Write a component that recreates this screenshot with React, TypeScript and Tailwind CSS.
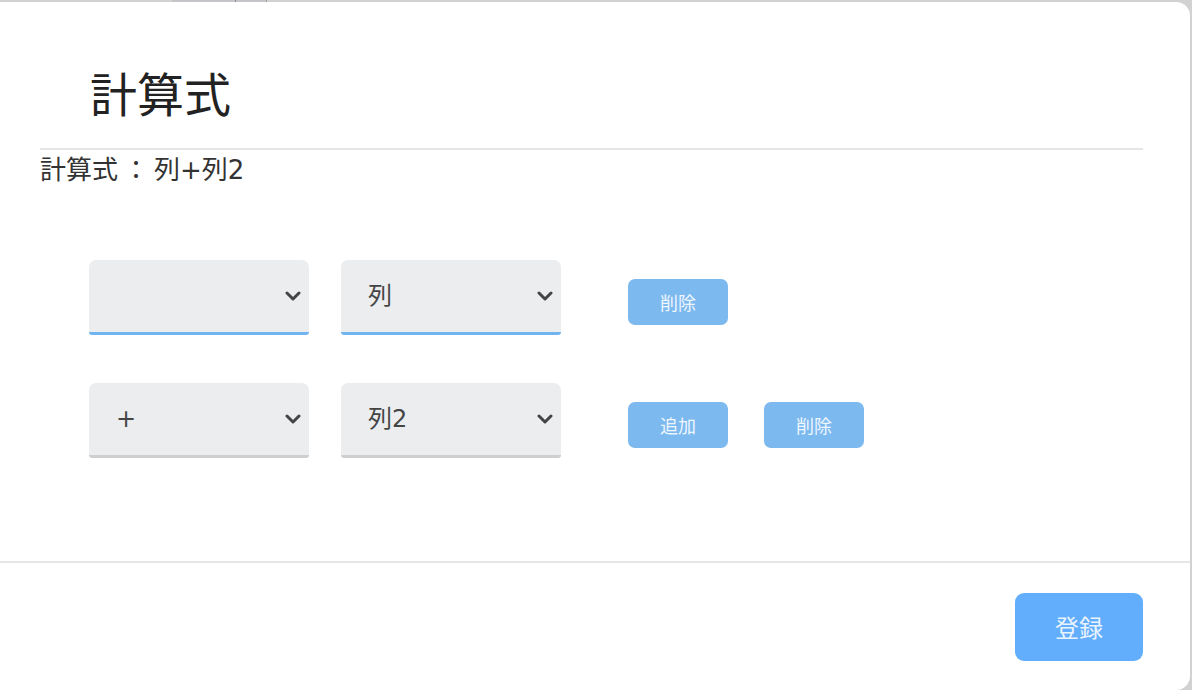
import React from 'react';

const font = { fontFamily: '"Noto Sans CJK JP", "Noto Sans", sans-serif' };
const mixed = { fontFamily: '"DejaVu Sans", "Noto Sans CJK JP", sans-serif' };

function Chevron() {
  return (
    <svg width="16" height="10" viewBox="0 0 16 10" className="shrink-0">
      <polyline points="2,2 8,8 14,2" fill="none" stroke="#444" strokeWidth="3" strokeLinecap="round" strokeLinejoin="round" />
    </svg>
  );
}

function FakeSelect({ value, active }: { value: string; active?: boolean }) {
  return (
    <div
      className={
        'w-[220px] h-[75px] bg-[#ebedef] rounded-t-[7px] rounded-b-[3px] flex items-center justify-between pl-[27px] pr-[8px] border-b-[3px] ' +
        (active ? 'border-[#72b4ef]' : 'border-[#cfcfcf]')
      }
    >
      <span className="text-[24px] text-[#444] leading-none" style={mixed}>{value}</span>
      <Chevron />
    </div>
  );
}

function SmallButton({ label }: { label: string }) {
  return (
    <button className="w-[100px] h-[46px] rounded-[7px] bg-[#7cb9ef] text-[#eef6fe] text-[18px] leading-none">
      {label}
    </button>
  );
}

export default function App() {
  const rows = [
    { op: '', col: '列', active: true, canAdd: false },
    { op: '+', col: '列2', active: false, canAdd: true },
  ];

  return (
    <div className="w-[1192px] h-[690px] bg-[#d2d2d2] overflow-hidden flex flex-col" style={font}>
      {/* backdrop strip */}
      <div className="h-[2px] flex shrink-0">
        <div className="ml-[172px] w-[95px] h-full bg-[#c4c6c9] flex justify-between">
          <span className="w-px bg-[#8a8f96] ml-[63px]" />
          <span className="w-px bg-[#9aa0a8]" />
        </div>
      </div>

      <div className="flex-1 bg-white rounded-tr-[14px] rounded-br-[14px] mr-[2px] flex flex-col">
        {/* header */}
        <div className="pl-[40px] pr-[47px]">
          <div className="h-[148px] border-b-2 border-[#e6e6e6] pl-[50px] pt-[66px]">
            <h1 className="text-[47px] leading-[48px] text-[#222]">計算式</h1>
          </div>
          <div className="mt-[5px] text-[26px] leading-[30px] text-[#333]" style={mixed}>
            計算式<span className="mx-[5px]">：</span>列+列2
          </div>
        </div>

        {/* formula rows */}
        <div className="flex-1 pl-[89px] pt-[75px] flex flex-col gap-[48px]">
          {rows.map((r, i) => (
            <div key={i} className="flex items-center">
              <div className="flex gap-[32px]">
                <FakeSelect value={r.op} active={r.active} />
                <FakeSelect value={r.col} active={r.active} />
              </div>
              <div className="ml-[67px] mt-[8px] flex gap-[36px]">
                {r.canAdd && <SmallButton label="追加" />}
                <SmallButton label="削除" />
              </div>
            </div>
          ))}
        </div>

        {/* footer */}
        <div className="h-[129px] border-t-2 border-[#e6e6e6] flex justify-end items-start pr-[47px] pt-[30px]">
          <button className="w-[128px] h-[68px] rounded-[9px] bg-[#62aefc] text-[#eaf4ff] text-[24px] leading-none">
            登録
          </button>
        </div>
      </div>
    </div>
  );
}
